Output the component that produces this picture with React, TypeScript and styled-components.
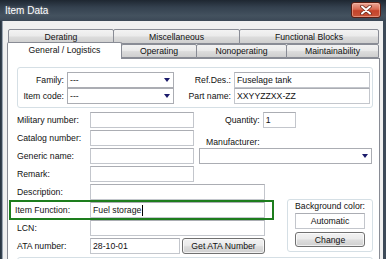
import React from "react";
import styled, { createGlobalStyle } from "styled-components";

const GlobalStyle = createGlobalStyle`
  html, body {
    margin: 0;
    padding: 0;
    background: #fff;
  }
  body {
    font-family: "Liberation Sans", Arial, sans-serif;
    font-size: 8.7px;
    color: #111;
  }
  * {
    box-sizing: border-box;
  }
`;

// window chrome
const Window = styled.div`
  width: 386px;
  height: 259px;
  overflow: hidden;
  display: flex;
  flex-direction: column;
  background: linear-gradient(to right, #24303c 0, #3d4a58 2px, #3d4a58 100%);
`;

const TitleBar = styled.div`
  height: 21px;
  flex: none;
  display: flex;
  align-items: flex-start;
  justify-content: space-between;
  background: linear-gradient(180deg, #1e2731 0%, #34414f 35%, #44525f 75%, #3b4856 100%);
`;

const Title = styled.span`
  margin: 5px 0 0 5px;
  font-size: 10px;
  color: #fff;
  text-shadow: 0 0 3px rgba(255, 255, 255, 0.35);
`;

const CloseButton = styled.div`
  width: 30px;
  height: 16px;
  margin: 2px 5px 0 0;
  border: 1px solid #5b1d12;
  border-radius: 3px;
  display: flex;
  align-items: center;
  justify-content: center;
  background: linear-gradient(180deg, #eba898 0%, #d96a52 45%, #c4432a 55%, #c9553a 100%);
  box-shadow: inset 0 0 0 1px rgba(255, 200, 180, 0.5);
`;

const Client = styled.div`
  flex: 1;
  margin: 0 3px 0 2px;
  border-left: 1px solid #9aa5b1;
  background: #f0f0f0;
  padding: 8px 3px 0 4px;
  display: flex;
  flex-direction: column;
  min-height: 0;
`;

// tabs
const TabRow = styled.div<{ $back?: boolean }>`
  display: flex;
  align-items: flex-end;
  height: ${(p) => (p.$back ? "15px" : "14px")};
  padding-left: ${(p) => (p.$back ? "1px" : "0")};
  padding-right: 1px;
  flex: none;
`;

const Tab = styled.div<{ $w: number; $active?: boolean }>`
  width: ${(p) => p.$w}px;
  height: ${(p) => (p.$active ? "17px" : "100%")};
  margin-bottom: ${(p) => (p.$active ? "-1px" : "0")};
  margin-top: ${(p) => (p.$active ? "0" : "1px")};
  position: relative;
  z-index: ${(p) => (p.$active ? 2 : 1)};
  display: flex;
  align-items: center;
  justify-content: center;
  padding-bottom: ${(p) => (p.$active ? "3px" : "0")};
  border: 1px solid #898c95;
  border-bottom: ${(p) => (p.$active ? "none" : "1px solid #898c95")};
  border-radius: 2px 2px 0 0;
  margin-left: -1px;
  &:first-child {
    margin-left: 0;
  }
  background: ${(p) =>
    p.$active
      ? "#fff"
      : "linear-gradient(180deg, #f3f3f3 0%, #ebebeb 45%, #dcdcdc 55%, #cfcfcf 100%)"};
  white-space: nowrap;
`;

const Panel = styled.div`
  flex: 1;
  border: 1px solid #898c95;
  border-bottom: none;
  background: #fff;
  padding: 8px 6px 0 9px;
  display: flex;
  flex-direction: column;
  position: relative;
  z-index: 1;
`;

// group boxes
const GroupBox = styled.div`
  border: 1px solid #d5dfe5;
  border-radius: 3px;
`;

const IdentGroup = styled(GroupBox)`
  display: grid;
  grid-template-columns: 46px 107px 54px 136px;
  grid-auto-rows: 16px;
  column-gap: 3px;
  padding: 4px 0 3px 0;
`;

const Label = styled.div<{ $right?: boolean }>`
  display: flex;
  align-items: center;
  justify-content: ${(p) => (p.$right ? "flex-end" : "flex-start")};
  white-space: nowrap;
  height: 16px;
`;

const Field = styled.div<{ $w?: number; $center?: boolean }>`
  height: 16px;
  width: ${(p) => (p.$w ? `${p.$w}px` : "auto")};
  border: 1px solid #c3c6cc;
  border-top-color: #abadb3;
  background: #fff;
  padding: 0 2px;
  display: flex;
  align-items: center;
  justify-content: ${(p) => (p.$center ? "center" : "flex-start")};
  white-space: nowrap;
  overflow: hidden;
`;

const Combo = styled(Field)`
  justify-content: space-between;
  padding-right: 3px;
  border-color: #abadb3;
`;

const Caret = styled.span`
  display: inline-block;
  width: 1px;
  height: 11px;
  background: #000;
  margin-left: 1px;
`;

const Section = styled.div<{ $top: number }>`
  display: flex;
  margin-top: ${(p) => p.$top}px;
  flex: none;
`;

const FormRows = styled.div<{ $input: number }>`
  display: grid;
  grid-template-columns: 73px ${(p) => p.$input}px;
  grid-auto-rows: 16px;
  row-gap: 2px;
  align-content: start;
`;

const HighlightRow = styled.div`
  grid-column: 1 / -1;
  display: grid;
  grid-template-columns: 75px 175px;
  margin: -2px -9px -2px -8px;
  padding-left: 4px;
  border: 2px solid #1d7d1d;
`;

const SplitCell = styled.div`
  display: flex;
  gap: 2px;
`;

const Button = styled.div<{ $w?: number; $h?: number }>`
  width: ${(p) => (p.$w ? `${p.$w}px` : "auto")};
  height: ${(p) => p.$h ?? 16}px;
  border: 1px solid #707070;
  border-radius: 3px;
  display: flex;
  align-items: center;
  justify-content: center;
  background: linear-gradient(180deg, #f2f2f2 0%, #ebebeb 45%, #dddddd 55%, #cfcfcf 100%);
  box-shadow: inset 0 0 0 1px rgba(255, 255, 255, 0.7);
  white-space: nowrap;
`;

const SideBlock = styled.div`
  margin-left: 5px;
  width: 173px;
  display: flex;
  flex-direction: column;
`;

const QuantityRow = styled.div`
  display: flex;
  align-items: center;
  padding-left: 26px;
  gap: 3px;
`;

const SideCaption = styled.div`
  margin-top: 8px;
  height: 12px;
  padding-left: 7px;
  display: flex;
  align-items: center;
`;

const ColorGroup = styled(GroupBox)`
  margin: 15px 0 0 auto;
  width: 86px;
  height: 53px;
  padding: 1px 7px 0 7px;
  display: flex;
  flex-direction: column;
  gap: 3px;
`;

const ColorCaption = styled.div`
  height: 11px;
  text-align: center;
  line-height: 11px;
  white-space: nowrap;
  margin-bottom: -2px;
`;

const NextGroup = styled(GroupBox)`
  margin-top: 3px;
  height: 30px;
  flex: none;
`;

const DropArrow = () => (
  <svg width="6" height="4" viewBox="0 0 6 4">
    <path d="M0 0h6L3 4z" fill="#1b1b6b" />
  </svg>
);

const CloseGlyph = () => (
  <svg width="12" height="10" viewBox="0 0 12 10">
    <path d="M2 1.5l8 7M10 1.5l-8 7" stroke="#6b2a1c" strokeWidth="3.6" strokeLinecap="round" />
    <path d="M2 1.5l8 7M10 1.5l-8 7" stroke="#fff" strokeWidth="2" strokeLinecap="round" />
  </svg>
);

const topTabs = [
  { label: "Derating", w: 106 },
  { label: "Miscellaneous", w: 127 },
  { label: "Functional Blocks", w: 140 },
];

const bottomTabs = [
  { label: "General / Logistics", w: 115, active: true },
  { label: "Operating", w: 76 },
  { label: "Nonoperating", w: 91 },
  { label: "Maintainability", w: 93 },
];

const App: React.FC = () => {
  return (
    <>
      <GlobalStyle />
      <Window>
        <TitleBar>
          <Title>Item Data</Title>
          <CloseButton>
            <CloseGlyph />
          </CloseButton>
        </TitleBar>
        <Client>
          <TabRow $back>
            {topTabs.map((t) => (
              <Tab key={t.label} $w={t.w}>
                {t.label}
              </Tab>
            ))}
          </TabRow>
          <TabRow>
            {bottomTabs.map((t) => (
              <Tab key={t.label} $w={t.w} $active={t.active}>
                {t.label}
              </Tab>
            ))}
          </TabRow>
          <Panel>
            <IdentGroup>
              <Label $right>Family:</Label>
              <Combo>
                <span>---</span>
                <DropArrow />
              </Combo>
              <Label $right>Ref.Des.:</Label>
              <Field>Fuselage tank</Field>
              <Label $right>Item code:</Label>
              <Combo>
                <span>---</span>
                <DropArrow />
              </Combo>
              <Label $right>Part name:</Label>
              <Field>XXYYZZXX-ZZ</Field>
            </IdentGroup>

            <Section $top={4}>
              <FormRows $input={104}>
                <Label>Military number:</Label>
                <Field />
                <Label>Catalog number:</Label>
                <Field />
                <Label>Generic name:</Label>
                <Field />
                <Label>Remark:</Label>
                <Field />
              </FormRows>
              <SideBlock>
                <QuantityRow>
                  <Label>Quantity:</Label>
                  <Field $w={33}>1</Field>
                </QuantityRow>
                <SideCaption>Manufacturer:</SideCaption>
                <Combo>
                  <span />
                  <DropArrow />
                </Combo>
              </SideBlock>
            </Section>

            <Section $top={2}>
              <FormRows $input={175}>
                <Label>Description:</Label>
                <Field />
                <HighlightRow>
                  <Label>Item Function:</Label>
                  <Field>
                    Fuel storage
                    <Caret />
                  </Field>
                </HighlightRow>
                <Label>LCN:</Label>
                <Field />
                <Label>ATA number:</Label>
                <SplitCell>
                  <Field $w={90}>28-10-01</Field>
                  <Button $w={83}>Get ATA Number</Button>
                </SplitCell>
              </FormRows>
              <ColorGroup>
                <ColorCaption>Background color:</ColorCaption>
                <Field $center>Automatic</Field>
                <Button $h={15}>Change</Button>
              </ColorGroup>
            </Section>

            <NextGroup />
          </Panel>
        </Client>
      </Window>
    </>
  );
};

export default App;
